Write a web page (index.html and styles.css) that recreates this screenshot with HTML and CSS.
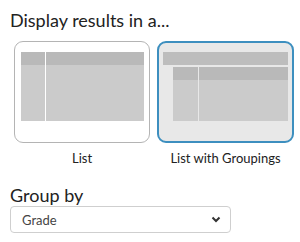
FILE: index.html
```html
<!DOCTYPE html>
<html>
<head>
<meta charset="utf-8">
<link rel="stylesheet" href="styles.css">
</head>
<body>
<div class="page">
  <h2 class="title">Display results in a...</h2>
  <div class="options">
    <div class="option">
      <div class="card">
        <div class="table">
          <div class="t-head"><div class="c1"></div><div class="c2"></div></div>
          <div class="t-body"><div class="c1"></div><div class="c2"></div></div>
        </div>
      </div>
      <div class="label">List</div>
    </div>
    <div class="option selected">
      <div class="card">
        <div class="group-bar"></div>
        <div class="table sub">
          <div class="t-head"><div class="c1"></div><div class="c2"></div></div>
          <div class="t-body"><div class="c1"></div><div class="c2"></div></div>
        </div>
      </div>
      <div class="label">List with Groupings</div>
    </div>
  </div>
  <h2 class="title group-title">Group by</h2>
  <select class="select">
    <option>Grade</option>
  </select>
</div>
</body>
</html>
```
FILE: styles.css
```css
html, body {
  margin: 0;
  padding: 0;
  background: #fff;
}
.page {
  width: 300px;
  padding: 0 10px;
  box-sizing: border-box;
  font-family: Lato, "Open Sans", sans-serif;
  color: #222;
}
.title {
  margin: 0;
  font-size: 18px;
  font-weight: 400;
  line-height: 20px;
}
.page > .title:first-child {
  padding-top: 10px;
}
.options {
  display: grid;
  grid-template-columns: 136px 137px;
  column-gap: 7px;
  margin: 11px 0 0 4px;
}
.option {
  display: flex;
  flex-direction: column;
  align-items: stretch;
}
.card {
  height: 102px;
  box-sizing: border-box;
  border: 1px solid #b4b4b4;
  border-radius: 9px;
  background: #fff;
  padding: 10px 5px 0 6px;
  display: flex;
  flex-direction: column;
}
.option.selected .card {
  border: 2px solid #3d8fbf;
  background: #e8e8e8;
  padding: 9px 4px 0 4px;
}
.table {
  display: flex;
  flex-direction: column;
}
.t-head, .t-body {
  display: flex;
  gap: 1px;
}
.t-head {
  height: 13px;
}
.t-body {
  height: 56px;
}
.t-head > div { background: #b9b9b9; }
.t-body > div { background: #cbcbcb; }
.c1 { width: 24px; }
.c2 { flex: 1; }
.group-bar {
  height: 13px;
  background: #bdbdbd;
}
.table.sub {
  margin: 2px 0 0 10px;
}
.table.sub .c1 { width: 25px; }
.table.sub .t-body { height: 41px; }
.label {
  text-align: center;
  font-size: 13px;
  line-height: 16px;
  margin-top: 7px;
  color: #222;
}
.group-title {
  margin-top: 19px;
}
.select {
  display: block;
  margin-top: 1px;
  width: 221px;
  height: 27px;
  box-sizing: border-box;
  border: 1px solid #cfcfcf;
  border-radius: 4px;
  background: #fff url("data:image/svg+xml;utf8,<svg xmlns='http://www.w3.org/2000/svg' width='10' height='7' viewBox='0 0 10 7'><path d='M1.5 1.5 L5 5 L8.5 1.5' fill='none' stroke='%23333' stroke-width='2'/></svg>") no-repeat right 9px center;
  -webkit-appearance: none;
  appearance: none;
  padding: 0 0 0 11px;
  font-family: Lato, "Open Sans", sans-serif;
  font-size: 13px;
  color: #444;
  outline: none;
}
```
